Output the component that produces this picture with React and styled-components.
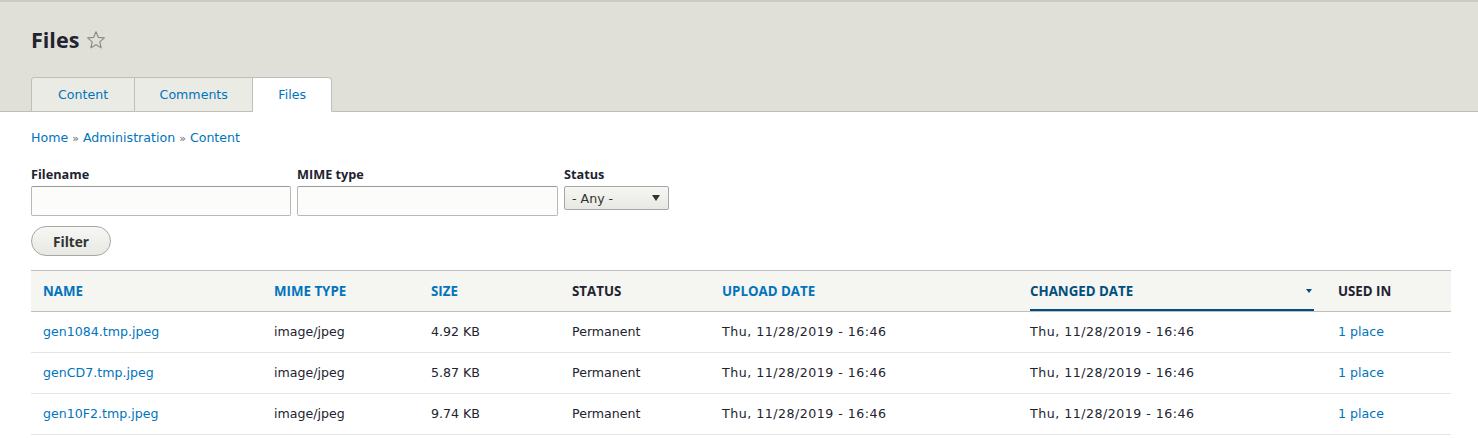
import styled, { createGlobalStyle } from 'styled-components'

const GlobalStyle = createGlobalStyle`
  body {
    margin: 0;
    background: #fff;
    font-family: "DejaVu Sans", Verdana, sans-serif;
    font-size: 12.6px;
    color: #222330;
  }
  * {
    box-sizing: border-box;
  }
`

const rows = [
  { name: 'gen1084.tmp.jpeg', size: '4.92 KB' },
  { name: 'genCD7.tmp.jpeg', size: '5.87 KB' },
  { name: 'gen10F2.tmp.jpeg', size: '9.74 KB' },
]

const columns = [
  { label: 'Name', width: 231, link: true },
  { label: 'MIME type', width: 157, link: true },
  { label: 'Size', width: 141, link: true },
  { label: 'Status', width: 150 },
  { label: 'Upload date', width: 308, link: true },
  { label: 'Changed date', width: 308, link: true, active: true },
  { label: 'Used in', width: 125 },
]

const Star = () => (
  <svg width="20" height="20" viewBox="0 0 20 20">
    <path
      d="M10 1.8l2.4 5.6 6 .5-4.6 4 1.4 5.9L10 14.7l-5.2 3.1 1.4-5.9-4.6-4 6-.5z"
      fill="none"
      stroke="#8d8d84"
      strokeWidth="1.2"
      strokeLinejoin="round"
    />
  </svg>
)

export default function App() {
  return (
    <>
      <GlobalStyle />
      <Header>
        <TitleRow>
          <Title>Files</Title>
          <Star />
        </TitleRow>
        <Tabs>
          <Tab>Content</Tab>
          <Tab>Comments</Tab>
          <Tab $active>Files</Tab>
        </Tabs>
      </Header>

      <Main>
        <Breadcrumb>
          <Link>Home</Link> <Sep>»</Sep> <Link>Administration</Link> <Sep>»</Sep> <Link>Content</Link>
        </Breadcrumb>

        <Filters>
          <Field>
            <Label>Filename</Label>
            <TextInput />
          </Field>
          <Field>
            <Label>MIME type</Label>
            <TextInput $wide />
          </Field>
          <Field>
            <Label>Status</Label>
            <Select>
              <span>- Any -</span>
              <Caret />
            </Select>
          </Field>
        </Filters>

        <FilterBtn>Filter</FilterBtn>

        <Table>
          <colgroup>
            {columns.map((c) => (
              <col key={c.label} style={{ width: c.width }} />
            ))}
          </colgroup>
          <thead>
            <tr>
              {columns.map((c) => (
                <Th key={c.label}>
                  <HeadLabel $link={c.link} $active={c.active}>
                    {c.label}
                    {c.active && <SortArrow />}
                  </HeadLabel>
                </Th>
              ))}
            </tr>
          </thead>
          <tbody>
            {rows.map((r) => (
              <tr key={r.name}>
                <Td>
                  <Link>{r.name}</Link>
                </Td>
                <Td>image/jpeg</Td>
                <Td>{r.size}</Td>
                <Td>Permanent</Td>
                <Td $date>Thu, 11/28/2019 - 16:46</Td>
                <Td $date>Thu, 11/28/2019 - 16:46</Td>
                <Td>
                  <Link>1 place</Link>
                </Td>
              </tr>
            ))}
          </tbody>
        </Table>
      </Main>
    </>
  )
}

const Header = styled.header`
  padding: 24px 31px 0;
  background: #e0e0d8;
  border-top: 2px solid #cacac3;
  border-bottom: 1px solid #bfbfba;
`
const TitleRow = styled.div`
  display: flex;
  align-items: center;
  gap: 7px;
  height: 28px;
`
const Title = styled.h1`
  margin: 0;
  font-family: "Open Sans", sans-serif;
  font-size: 21.5px;
  font-weight: 700;
  line-height: 28px;
  color: #222330;
`
const Tabs = styled.nav`
  display: flex;
  margin-top: 23px;
  margin-bottom: -1px;
`
const Tab = styled.a`
  display: flex;
  align-items: center;
  height: 35px;
  padding: 0 ${(p) => (p.$active ? '25px' : '24.5px')} 1px;
  color: #0074bd;
  background: ${(p) => (p.$active ? '#fff' : '#ebebe6')};
  border: 1px solid #bfbfba;
  border-bottom-color: ${(p) => (p.$active ? '#fff' : '#bfbfba')};
  border-radius: ${(p) => (p.$active ? '0 4px 0 0' : '0')};
  & + & {
    border-left: ${(p) => (p.$active ? '0' : '1px solid #bfbfba')};
  }
  &:first-child {
    padding: 0 26px 1px;
    border-radius: 3px 0 0 0;
  }
`
const Main = styled.main`
  padding: 17px 27px 20px 31px;
`
const Breadcrumb = styled.div`
  line-height: 18px;
`
const Link = styled.a`
  color: #0074bd;
  text-decoration: none;
`
const Sep = styled.span`
  color: #666;
  font-size: 11px;
`
const Filters = styled.div`
  display: flex;
  align-items: flex-start;
  gap: 6px;
  margin-top: 17px;
`
const Field = styled.div`
  display: flex;
  flex-direction: column;
`
const Label = styled.label`
  margin-bottom: 3px;
  font-family: "Open Sans", sans-serif;
  font-size: 12.7px;
  font-weight: 700;
  line-height: 18px;
  color: #222330;
`
const TextInput = styled.div`
  width: ${(p) => (p.$wide ? '261px' : '260px')};
  height: 30px;
  background: #fcfcfa;
  border: 1px solid #b8b8b8;
  border-top-color: #999;
  border-radius: 2px;
`
const Select = styled.div`
  display: flex;
  align-items: center;
  justify-content: space-between;
  width: 105px;
  height: 24px;
  padding: 0 6px 0 7px;
  background: linear-gradient(#f6f6f3, #e8e8e3);
  border: 1px solid #a6a6a6;
  border-radius: 2px;
  color: #333;
  font-size: 12.6px;
`
const Caret = styled.span`
  width: 0;
  height: 0;
  border-left: 4.5px solid transparent;
  border-right: 4.5px solid transparent;
  border-top: 6px solid #333;
  margin-right: 2px;
`
const FilterBtn = styled.button`
  display: block;
  width: 80px;
  height: 30px;
  margin-top: 10px;
  padding: 0;
  font-family: "Open Sans", sans-serif;
  font-size: 13.7px;
  font-weight: 700;
  color: #333;
  background: linear-gradient(#f6f6f3, #e8e8e3);
  border: 1px solid #a6a6a6;
  border-radius: 20px;
`
const Table = styled.table`
  width: 1420px;
  margin-top: 14px;
  border-collapse: collapse;
  table-layout: fixed;
`
const Th = styled.th`
  height: 41px;
  padding: 0 12px;
  text-align: left;
  background: #f5f5f2;
  border-top: 1px solid #bfbfba;
  border-bottom: 1px solid #bfbfba;
  vertical-align: bottom;
`
const HeadLabel = styled.div`
  display: flex;
  align-items: center;
  justify-content: space-between;
  height: 40px;
  padding-bottom: 1px;
  padding-top: ${(p) => (p.$active ? '2px' : '0')};
  font-family: "Open Sans", sans-serif;
  font-size: 13.3px;
  font-weight: 700;
  text-transform: uppercase;
  color: ${(p) => (p.$active ? '#004f80' : p.$link ? '#0074bd' : '#222330')};
  border-bottom: ${(p) => (p.$active ? '3px solid #004f80' : '0')};
  margin-bottom: ${(p) => (p.$active ? '-1px' : '0')};
`
const SortArrow = styled.span`
  width: 0;
  height: 0;
  margin-right: 2px;
  border-left: 3.5px solid transparent;
  border-right: 3.5px solid transparent;
  border-top: 4px solid #004f80;
`
const Td = styled.td`
  height: 41px;
  padding: 0 12px 1px;
  border-bottom: 1px solid #e6e4df;
  white-space: nowrap;
  letter-spacing: ${(p) => (p.$date ? '0.5px' : '0')};
`
